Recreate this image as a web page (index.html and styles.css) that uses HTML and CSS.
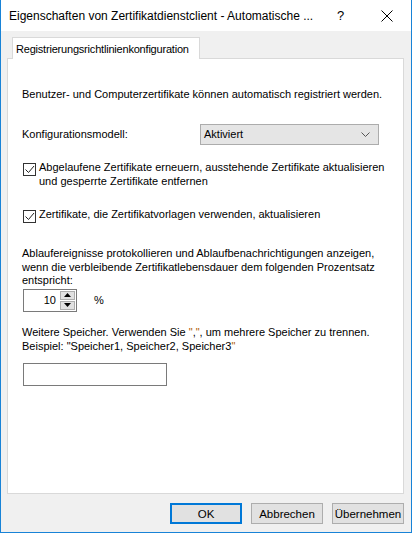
FILE: index.html
```html
<!DOCTYPE html>
<html lang="de">
<head>
<meta charset="utf-8">
<title>Eigenschaften von Zertifikatdienstclient</title>
<link rel="stylesheet" href="styles.css">
</head>
<body>
<div class="window">
  <div class="titlebar">
    <span class="title">Eigenschaften von Zertifikatdienstclient - Automatische ...</span>
    <span class="help">?</span>
    <span class="close">
      <svg width="12" height="12" viewBox="0 0 12 12"><path d="M0.5 0.5 L11.5 11.5 M11.5 0.5 L0.5 11.5" stroke="#000" stroke-width="1" fill="none"/></svg>
    </span>
  </div>
  <div class="body">
    <div class="tabs"><div class="tab">Registrierungsrichtlinienkonfiguration</div></div>
    <div class="panel">
      <p class="intro">Benutzer- und Computerzertifikate können automatisch registriert werden.</p>
      <div class="config-row">
        <span class="label">Konfigurationsmodell:</span>
        <div class="select">
          <span>Aktiviert</span>
          <svg width="9" height="5" viewBox="0 0 9 5"><path d="M0.5 0.5 L4.5 4.5 L8.5 0.5" stroke="#555" stroke-width="1" fill="none"/></svg>
        </div>
      </div>
      <div class="check check-1">
        <span class="box"><svg width="11" height="11" viewBox="0 0 11 11"><path d="M1.5 5.5 L4.5 8.5 L10 2" stroke="#222" stroke-width="1" fill="none"/></svg></span>
        <span class="check-text">Abgelaufene Zertifikate erneuern, ausstehende Zertifikate aktualisieren<br>und gesperrte Zertifikate entfernen</span>
      </div>
      <div class="check check-2">
        <span class="box"><svg width="11" height="11" viewBox="0 0 11 11"><path d="M1.5 5.5 L4.5 8.5 L10 2" stroke="#222" stroke-width="1" fill="none"/></svg></span>
        <span class="check-text">Zertifikate, die Zertifikatvorlagen verwenden, aktualisieren</span>
      </div>
      <p class="para">Ablaufereignisse protokollieren und Ablaufbenachrichtigungen anzeigen,<br>wenn die verbleibende Zertifikatlebensdauer dem folgenden Prozentsatz<br>entspricht:</p>
      <div class="spin-row">
        <div class="spin">
          <span class="spin-value">10</span>
          <div class="spin-buttons">
            <span class="spin-btn"><svg width="7" height="4" viewBox="0 0 7 4"><path d="M3.5 0 L7 4 L0 4 Z" fill="#000"/></svg></span>
            <span class="spin-btn"><svg width="7" height="4" viewBox="0 0 7 4"><path d="M0 0 L7 0 L3.5 4 Z" fill="#000"/></svg></span>
          </div>
        </div>
        <span class="percent">%</span>
      </div>
      <p class="para stores">Weitere Speicher. Verwenden Sie <span class="q">"</span>,<span class="q">"</span>, um mehrere Speicher zu trennen.<br>Beispiel: "Speicher1, Speicher2, Speicher3<span class="q">"</span></p>
      <div class="textbox"></div>
    </div>
    <div class="buttons">
      <button class="btn default">OK</button>
      <button class="btn">Abbrechen</button>
      <button class="btn">Übernehmen</button>
    </div>
  </div>
</div>
</body>
</html>
```
FILE: styles.css
```css
* { box-sizing: border-box; }
html, body { margin: 0; padding: 0; }
body {
  font-family: "Liberation Sans", Arial, sans-serif;
  font-size: 11px;
  color: #000;
  background: #fff;
}
.window {
  width: 412px;
  height: 533px;
  border: 1px solid #1883d7;
  border-top: none;
  display: flex;
  flex-direction: column;
  background: #f0f0f0;
}
.titlebar {
  height: 31px;
  background: #fff;
  display: flex;
  align-items: center;
  padding-left: 8px;
  flex: none;
}
.title { flex: 1; font-size: 12px; white-space: nowrap; }
.help { width: 20px; font-size: 13px; margin-right: 24px; }
.close { width: 12px; height: 12px; margin-right: 18px; display: flex; }
.body {
  flex: 1;
  padding: 6px 7px 0 6px;
  display: flex;
  flex-direction: column;
}
.tabs { display: flex; padding-left: 5px; }
.tab {
  width: 188px;
  height: 22px;
  padding: 3px 0 0 3px;
  background: #fff;
  border: 1px solid #d9d9d9;
  border-bottom: none;
  margin-bottom: -1px;
  position: relative;
  z-index: 1;
  line-height: 16px;
  white-space: nowrap;
  letter-spacing: -0.2px;
}
.panel {
  height: 436px;
  background: #fff;
  border: 1px solid #d9d9d9;
  padding: 0 14px;
  white-space: nowrap;
}
p { margin: 0; }
.intro { margin-top: 28px; line-height: 14px; }
.config-row {
  margin-top: 22px;
  display: flex;
  align-items: center;
  height: 22px;
}
.label { width: 178px; }
.select {
  width: 179px;
  height: 21px;
  background: #e5e5e5;
  border: 1px solid #acacac;
  display: flex;
  align-items: center;
  justify-content: space-between;
  padding: 0 8px 0 3px;
}
.check { display: flex; line-height: 14px; }
.check-1 { margin-top: 15px; }
.check-2 { margin-top: 19px; }
.box {
  width: 13px;
  height: 13px;
  border: 1px solid #333;
  flex: none;
  margin-top: 3px;
  margin-right: 3px;
  margin-left: 1px;
  display: flex;
  align-items: center;
  justify-content: center;
  background: #fff;
}
.para { line-height: 13.5px; margin-top: 24px; }
.spin-row { display: flex; align-items: center; margin-top: 1px; }
.spin {
  width: 54px;
  height: 23px;
  border: 1px solid #7a7a7a;
  display: flex;
  align-items: stretch;
  margin-left: 1px;
}
.spin-value { flex: 1; text-align: right; padding-right: 4px; line-height: 21px; }
.spin-buttons { width: 16px; display: flex; flex-direction: column; gap: 1px; padding: 1px 1px 1px 0; }
.spin-btn {
  flex: 1;
  background: #e1e1e1;
  border: 1px solid #adadad;
  display: flex;
  align-items: center;
  justify-content: center;
}
.percent { margin-left: 17px; }
.stores { margin-top: 13px; line-height: 14px; }
.q { color: #b05a00; }
.textbox {
  width: 144px;
  height: 23px;
  border: 1px solid #7a7a7a;
  margin-top: 10px;
  margin-left: 1px;
}
.buttons {
  display: flex;
  justify-content: flex-end;
  gap: 9px;
  margin-top: 9px;
}
.btn {
  width: 72px;
  height: 21px;
  background: #e1e1e1;
  border: 1px solid #adadad;
  font-family: inherit;
  font-size: 11.5px;
  color: #000;
  padding: 0;
}
.btn.default { border: 2px solid #0078d7; }
```
